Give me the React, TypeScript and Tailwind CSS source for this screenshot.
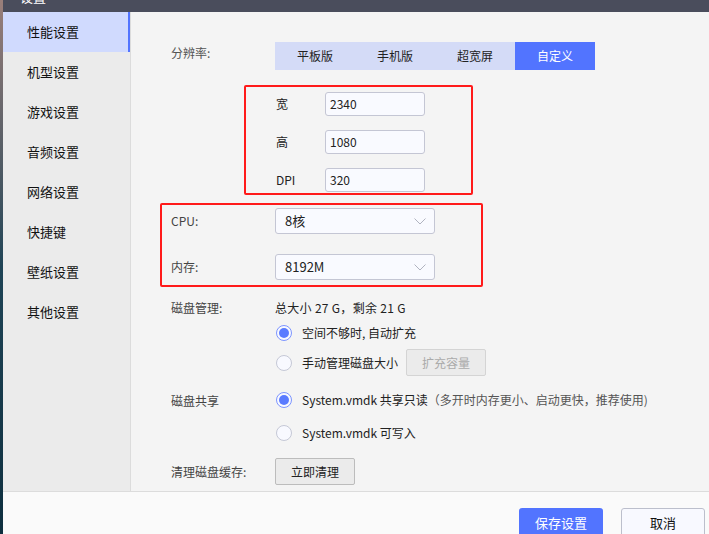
import React from "react";

const font = { fontFamily: '"Noto Sans CJK SC", "Noto Sans", sans-serif' };

function Radio({ checked }: { checked?: boolean }) {
  return checked ? (
    <span className="flex h-[16px] w-[16px] items-center justify-center rounded-full border border-[#7d95ff] bg-[#f8f9ff]">
      <span className="h-[10px] w-[10px] rounded-full bg-[#5a7bff]" />
    </span>
  ) : (
    <span className="h-[16px] w-[16px] rounded-full border border-[#c5c8d6] bg-[#f8f9ff]" />
  );
}

function Chevron() {
  return (
    <svg width="12" height="7" viewBox="0 0 12 7" fill="none">
      <path d="M0.5 0.5 L6 6 L11.5 0.5" stroke="#b0b3c0" strokeWidth="1" />
    </svg>
  );
}

function Select({ value }: { value: string }) {
  return (
    <div className="flex h-[26px] w-[160px] items-center justify-between rounded-[3px] border border-[#c4c6d4] bg-[#f9faff] pl-[9px] pr-[8px] text-[13px] text-[#222]">
      <span>{value}</span>
      <Chevron />
    </div>
  );
}

function Input({ value }: { value: string }) {
  return (
    <div className="flex h-[24px] w-[100px] items-center rounded-[3px] border border-[#c4c6d4] bg-[#f9faff] pl-[4px] text-[12px] text-[#222]">
      {value}
    </div>
  );
}

export default function App() {
  const nav = ["性能设置", "机型设置", "游戏设置", "音频设置", "网络设置", "快捷键", "壁纸设置", "其他设置"];
  const segs = ["平板版", "手机版", "超宽屏", "自定义"];
  return (
    <div style={font} className="flex h-[534px] w-[709px] overflow-hidden bg-[#f4f4f4]">
      <div className="w-[3px] shrink-0 bg-gradient-to-b from-[#9a7f7a] via-[#1f4456] to-[#0e2f3f]" />
      <div className="flex min-w-0 flex-1 flex-col">
        <div className="relative h-[12px] shrink-0 overflow-hidden bg-[#4a4d5c]">
          <span className="absolute left-[17px] top-[-13px] text-[13px] text-white">设置</span>
        </div>
        <div className="flex min-h-0 flex-1">
          <div className="w-[128px] shrink-0 border-r border-[#dcdcdc] bg-[#ebebeb]">
            {nav.map((n, i) => (
              <div
                key={n}
                className={
                  i === 0
                    ? "flex h-[40px] items-center border-r-2 border-[#5274ff] bg-[#d0dafe] pl-[24px] text-[13px] text-[#111]"
                    : "flex h-[40px] items-center pl-[24px] text-[13px] text-[#111]"
                }
              >
                {n}
              </div>
            ))}
          </div>
          <div className="flex-1 pt-[30px] text-[12px] text-[#333]">
            {/* resolution */}
            <div className="flex h-[28px]">
              <div className="w-[144px] pl-[40px] pt-[2px] text-[#555]">分辨率:</div>
              <div className="flex">
                {segs.map((s, i) => (
                  <div
                    key={s}
                    className={
                      i === 3
                        ? "flex h-[28px] w-[80px] items-center justify-center bg-[#5274ff] text-[12px] text-white"
                        : "flex h-[28px] w-[80px] items-center justify-center bg-[#d4dbf7] text-[12px] text-[#222]"
                    }
                  >
                    {s}
                  </div>
                ))}
              </div>
            </div>
            {/* red box 1 */}
            <div className="ml-[113px] mt-[15px] flex h-[110px] w-[229px] flex-col gap-[14px] rounded-[2px] border-2 border-[#ff1a1a] pl-[30px] pt-[5px]">
              {[
                ["宽", "2340"],
                ["高", "1080"],
                ["DPI", "320"],
              ].map(([l, v]) => (
                <div key={l} className="flex h-[24px] items-center text-[#222]">
                  <span className="w-[49px]">{l}</span>
                  <Input value={v} />
                </div>
              ))}
            </div>
            {/* red box 2 */}
            <div className="ml-[29px] mt-[8px] flex h-[84px] w-[323px] flex-col gap-[20px] rounded-[2px] border-2 border-[#ff1a1a] pl-[9px] pt-[3px]">
              <div className="flex h-[26px] items-center">
                <span className="w-[104px] text-[#444]">CPU:</span>
                <Select value="8核" />
              </div>
              <div className="flex h-[26px] items-center">
                <span className="w-[104px] text-[#444]">内存:</span>
                <Select value="8192M" />
              </div>
            </div>
            {/* disk management */}
            <div className="mt-[12px] flex">
              <div className="w-[144px] pl-[40px] text-[#444]">磁盘管理:</div>
              <div className="flex flex-col text-[#222]">
                <div className="h-[16px] text-[12px] tracking-[0.3px]">总大小 27 G，剩余 21 G</div>
                <div className="mt-[10px] flex h-[16px] items-center gap-[10px] pl-[1px]">
                  <Radio checked />
                  <span>空间不够时, 自动扩充</span>
                </div>
                <div className="mt-[8px] flex h-[27px] items-center pl-[1px]">
                  <Radio />
                  <span className="ml-[10px]">手动管理磁盘大小</span>
                  <span className="ml-[8px] flex h-[27px] w-[80px] items-center justify-center rounded-[2px] border border-[#d4d4d4] bg-[#ebebeb] text-[#aaa]">
                    扩充容量
                  </span>
                </div>
              </div>
            </div>
            {/* disk share */}
            <div className="mt-[16px] flex">
              <div className="w-[144px] pl-[40px] text-[#444]">磁盘共享</div>
              <div className="flex flex-col text-[#222]">
                <div className="flex h-[16px] items-center gap-[10px] pl-[1px]">
                  <Radio checked />
                  <span>
                    System.vmdk 共享只读<span className="text-[#555]">（多开时内存更小、启动更快，推荐使用)</span>
                  </span>
                </div>
                <div className="mt-[17px] flex h-[16px] items-center gap-[10px] pl-[1px]">
                  <Radio />
                  <span>System.vmdk 可写入</span>
                </div>
              </div>
            </div>
            {/* clear cache */}
            <div className="mt-[17px] flex items-center">
              <div className="w-[144px] pl-[40px] text-[#444]">清理磁盘缓存:</div>
              <div className="flex h-[27px] w-[80px] items-center justify-center rounded-[2px] border border-[#bcbcbc] bg-[#ebebeb] text-[#222]">
                立即清理
              </div>
            </div>
          </div>
        </div>
        <div className="flex h-[43px] shrink-0 items-start justify-end gap-[18px] border-t border-[#dcdcdc] bg-[#fafafa] pr-[4px] pt-[16px]">
          <div className="flex h-[30px] w-[84px] items-center justify-center rounded-[3px] bg-[#5274ff] text-[13px] text-white">
            保存设置
          </div>
          <div className="flex h-[30px] w-[84px] items-center justify-center rounded-[3px] border border-[#bcbfcc] bg-[#f8f9ff] text-[13px] text-[#111]">
            取消
          </div>
        </div>
      </div>
    </div>
  );
}
